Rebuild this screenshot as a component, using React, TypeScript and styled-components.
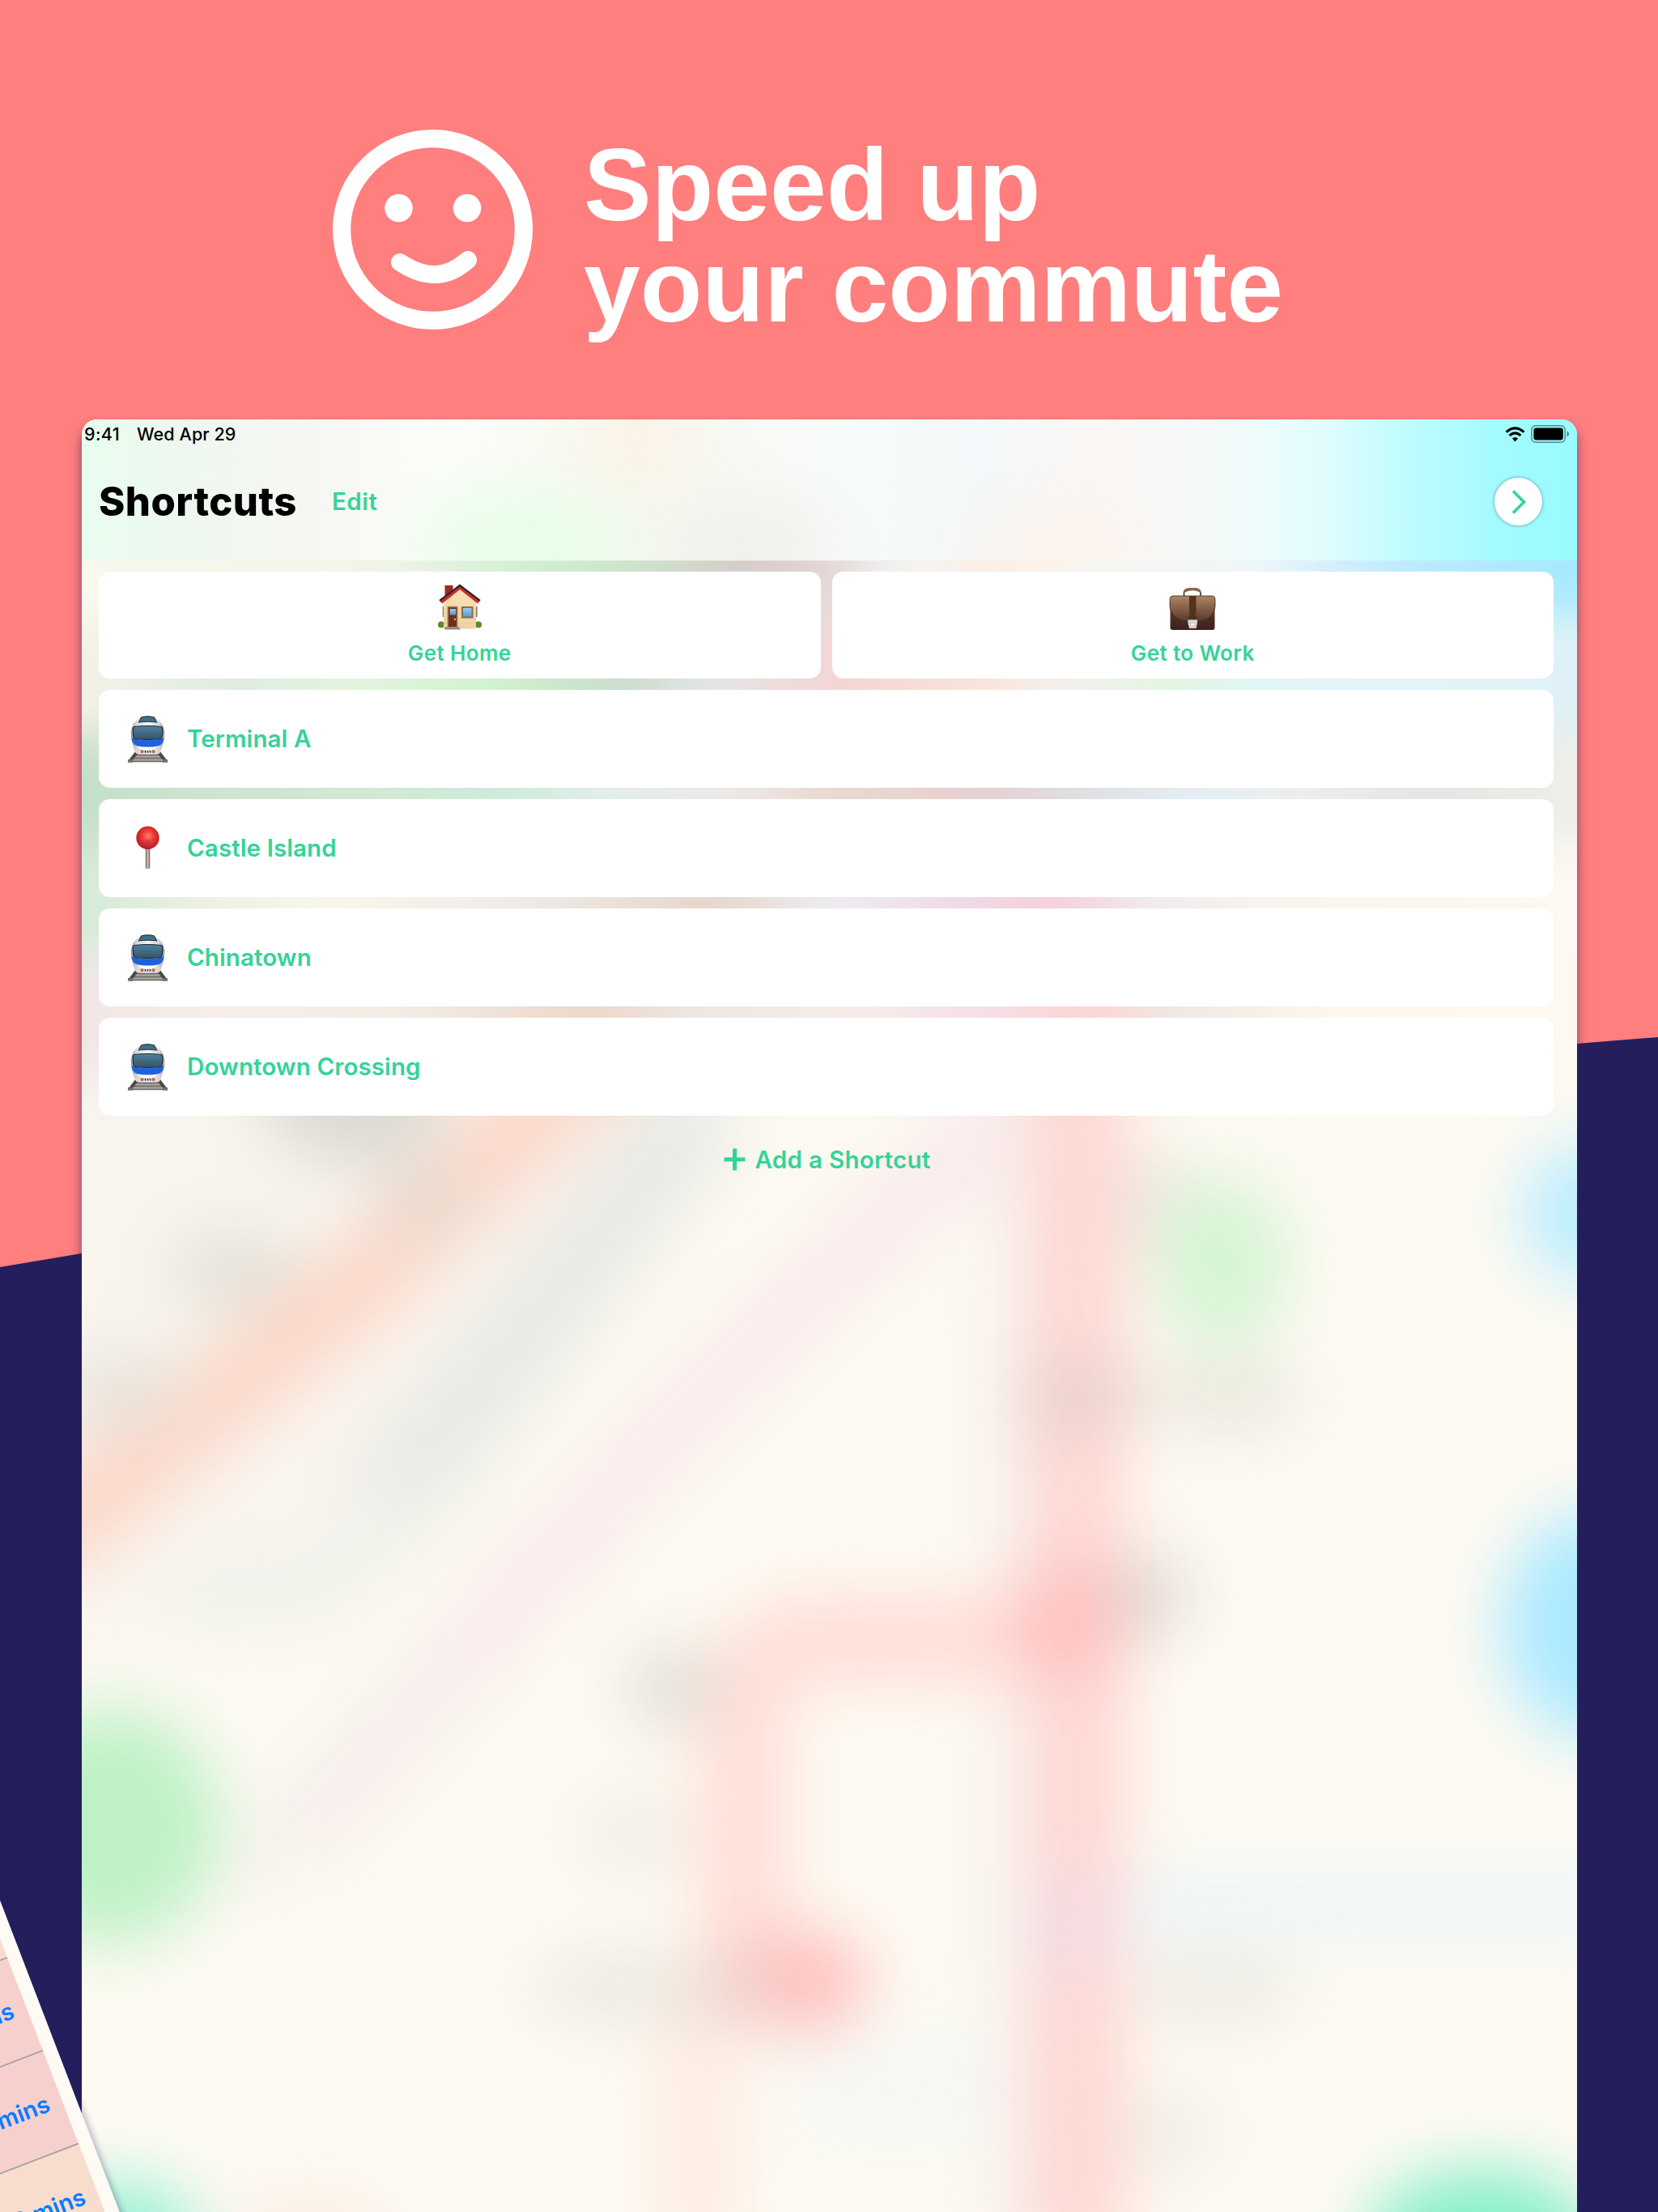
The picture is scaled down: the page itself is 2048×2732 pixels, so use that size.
import styled, { createGlobalStyle } from "styled-components";

const GlobalStyle = createGlobalStyle`
  * {
    box-sizing: border-box;
  }

  body {
    margin: 0;
    background-color: #ff7e7e;
  }

  p, h1, h2 {
    margin: 0;
  }
`;

const Page = styled.main`
  position: relative;
  width: 2048px;
  height: 2732px;
  overflow: hidden;
  background-color: #ff7e7e;
  font-family: Inter, "Liberation Sans", sans-serif;
`;

const NavyFloor = styled.div`
  position: absolute;
  inset: 0;
  background-color: #241f5c;
  clip-path: polygon(
    0 1565px,
    101px 1548px,
    1024px 1397px,
    1948px 1289px,
    2048px 1281px,
    2048px 2732px,
    0 2732px
  );
`;

const Hero = styled.header`
  position: relative;
  display: flex;
  align-items: flex-start;
  gap: 63px;
  height: 518px;
  padding: 160px 0 0 411px;
`;

const Headline = styled.h1`
  margin-top: 6px;
  color: #ffffff;
  font-family: "Liberation Sans", Arial, sans-serif;
  font-size: 125.4px;
  font-weight: 700;
  line-height: 125px;
  white-space: nowrap;
`;

const Screen = styled.section`
  position: relative;
  width: 1847px;
  height: 2260px;
  margin-left: 101px;
  border-radius: 19px;
  box-shadow: 0 10px 14px rgba(36, 31, 92, 0.6);
`;

const ScreenClip = styled.div`
  position: relative;
  height: 100%;
  border-radius: 19px;
  overflow: hidden;
  background-color: #fdfaf2;
`;

const MapArt = styled.svg`
  position: absolute;
  inset: 0;
`;

const TopBar = styled.div`
  position: relative;
  height: 174px;
`;

const StatusBar = styled.div`
  position: relative;
  display: flex;
  align-items: center;
  height: 36px;
  padding: 0 9px 0 3px;
  color: #000000;
  font-size: 21.5px;
  font-weight: 500;
`;

const StatusTime = styled.p`
  width: 65px;
  letter-spacing: 0.4px;
`;

const StatusDate = styled.p`
  flex-grow: 1;
  letter-spacing: 0.1px;
`;

const StatusIcons = styled.div`
  display: flex;
  align-items: center;
  gap: 7px;
`;

const TitleRow = styled.div`
  position: relative;
  display: flex;
  align-items: center;
  height: 130px;
  padding: 0 43px 0 21px;
`;

const Title = styled.h2`
  width: 288px;
  padding-top: 2px;
  font-size: 49px;
  font-weight: 800;
  line-height: 60px;
  letter-spacing: 0.5px;
`;

const EditButton = styled.button`
  flex-grow: 1;
  padding: 0;
  border: none;
  background: none;
  color: #34d399;
  font-family: inherit;
  font-size: 29.5px;
  font-weight: 600;
  letter-spacing: 0.5px;
  text-align: left;
`;

const NextButton = styled.button`
  display: flex;
  justify-content: center;
  align-items: center;
  width: 59px;
  height: 59px;
  margin-top: 1px;
  padding: 0 0 0 3px;
  border: none;
  border-radius: 50%;
  background-color: #ffffff;
  box-shadow: 0 0 4px rgba(0, 40, 50, 0.45);
`;

const ShortcutList = styled.div`
  position: relative;
  display: flex;
  flex-direction: column;
  gap: 14.3px;
  padding: 14px 29px 0 21px;
`;

const TileRow = styled.div`
  display: grid;
  grid-template-columns: 1fr 1fr;
  gap: 14px;
`;

const Tile = styled.div`
  display: flex;
  flex-direction: column;
  align-items: center;
  height: 132px;
  padding-top: 14px;
  border-radius: 14px;
  background-color: #ffffff;
`;

const TileLabel = styled.p`
  margin-top: 11px;
  color: #34d399;
  font-size: 26px;
  font-weight: 600;
  line-height: 32px;
  letter-spacing: 0.4px;
`;

const ShortcutRow = styled.div`
  display: flex;
  align-items: center;
  gap: 22px;
  height: 120.7px;
  padding-left: 34px;
  border-radius: 14px;
  background-color: #ffffff;
`;

const ShortcutName = styled.p`
  padding-bottom: 2px;
  color: #34d399;
  font-size: 29.5px;
  font-weight: 600;
  letter-spacing: 0.1px;
`;

const AddButton = styled.button`
  display: flex;
  justify-content: center;
  align-items: center;
  gap: 11px;
  height: 80px;
  padding: 0 0 0 3px;
  border: none;
  background: none;
  color: #34d399;
  font-family: inherit;
  font-size: 29.5px;
  font-weight: 600;
  letter-spacing: 0.3px;
`;

// second device, tilted and mostly off the page
const TiltedPhone = styled.aside`
  position: absolute;
  top: 2183px;
  left: -363px;
  width: 300px;
  height: 900px;
  padding: 0 17.5px;
  background-color: #fefaf4;
  box-shadow: 2px 2px 8px rgba(36, 31, 92, 0.35);
  transform: rotate(-21deg);
  transform-origin: top right;
`;

const DepartureRow = styled.div<{ $tone: string }>`
  display: flex;
  justify-content: flex-end;
  align-items: center;
  height: 123px;
  padding: 2px 16px 0 0;
  border-bottom: 2px solid #a3a1a3;
  background-color: ${(props) => props.$tone};
  color: #0a7cff;
  font-size: 29px;
  font-weight: 600;
`;

const bands = [
  {
    y: 360,
    height: 65,
    stops: ["0 #f9f7ee", "20 #f2f4ea", "31 #cdeed0", "38 #cfe0cc", "44 #d6ccc8", "50 #e3d5d5", "54 #f3f4f2", "62 #fdeee4", "68 #f7f7f2", "78 #f0f6f8", "88 #bfeaff", "100 #a6e9ff"],
  },
  {
    y: 440,
    height: 80,
    stops: ["0 #f5f2e8", "10 #dfece0", "18 #e4f3df", "27 #d1f3cf", "36 #cadccd", "42 #e4e6e6", "51 #f4d4d3", "60 #f9e4da", "66 #f3f1ee", "73 #e2f6e1", "80 #e3f4fb", "90 #e2f3fa", "100 #dff1f6"],
  },
  {
    y: 520,
    height: 78,
    stops: ["0 #c5dfca", "18 #d3e8d5", "28 #cdebd9", "35 #e3eeea", "44 #ece8e6", "50 #ead9cf", "60 #e6cfd1", "67 #dfe0e3", "75 #e4f0f6", "82 #eeeeec", "90 #e4e5e4", "100 #f0eee8"],
  },
  {
    y: 598,
    height: 78,
    stops: ["0 #d4ebd8", "8 #ecf0e3", "16 #f9f7ed", "30 #efeae7", "42 #e6d6cb", "50 #eeedf1", "58 #efdce9", "65 #f6cfd9", "71 #f0eaec", "80 #f9f5ee", "100 #fcf9f2"],
  },
  {
    y: 676,
    height: 78,
    stops: ["0 #f0e6e5", "10 #f7eee9", "22 #f1ece5", "34 #edd7cb", "41 #ece8e3", "52 #f7ecea", "60 #f4e0e8", "67 #fdd4d4", "73 #efe8e3", "84 #fdf8ee", "100 #fdf9f1"],
  },
];

const shortcuts = [
  { name: "Terminal A", icon: "train" },
  { name: "Castle Island", icon: "pin" },
  { name: "Chinatown", icon: "train" },
  { name: "Downtown Crossing", icon: "train" },
];

const departures = [
  { tone: "#f8ddcb", label: "3 mins" },
  { tone: "#f8ddcb", label: "5 mins" },
  { tone: "#f6d0cd", label: "6 mins" },
  { tone: "#f6d0cd", label: "8 mins" },
  { tone: "#f8ddcc", label: "9 mins" },
];

function BlurredMap() {
  return (
    <MapArt
      width="1847"
      height="2214"
      viewBox="57.95 297.2 1059.7 1270.3"
      preserveAspectRatio="none"
      fill="none"
    >
      <defs>
        <filter
          id="soft"
          filterUnits="userSpaceOnUse"
          x="-100"
          y="200"
          width="1400"
          height="1500"
          colorInterpolationFilters="sRGB"
        >
          <feGaussianBlur stdDeviation="23" />
        </filter>
        <filter
          id="bandSoft"
          filterUnits="userSpaceOnUse"
          x="-100"
          y="200"
          width="1400"
          height="1500"
          colorInterpolationFilters="sRGB"
        >
          <feGaussianBlur stdDeviation="14" />
        </filter>
        {bands.map((band, i) => (
          <linearGradient id={`band${i}`} key={i} gradientUnits="userSpaceOnUse" x1="58" x2="1118" y1="0" y2="0">
            {band.stops.map((stop) => {
              const [offset, color] = stop.split(" ");
              return <stop key={offset} offset={`${offset}%`} stopColor={color} />;
            })}
          </linearGradient>
        ))}
        <linearGradient id="bar" x1="0" x2="1" y1="0" y2="0">
          <stop offset="0" stopColor="#e7fdee" />
          <stop offset="0.06" stopColor="#edf8ef" />
          <stop offset="0.14" stopColor="#f5f6f1" />
          <stop offset="0.24" stopColor="#fcfdf9" />
          <stop offset="0.37" stopColor="#f8f7ef" />
          <stop offset="0.5" stopColor="#f7fbf8" />
          <stop offset="0.6" stopColor="#f3f8fa" />
          <stop offset="0.68" stopColor="#fbf6f3" />
          <stop offset="0.78" stopColor="#f1fbfb" />
          <stop offset="0.83" stopColor="#e0fcfd" />
          <stop offset="0.89" stopColor="#bdfbfe" />
          <stop offset="0.95" stopColor="#a2fbff" />
          <stop offset="1" stopColor="#98fbff" />
        </linearGradient>
      </defs>

      <g filter="url(#soft)">
        <path d="M20 730H560L420 920L200 1140L20 1180Z" fill="#f9f5ee" />
        <path d="M500 780L370 950L270 1070" stroke="#e9e9e4" strokeWidth="72" />
        <path d="M310 1060L220 1130L120 1135" stroke="#efefe9" strokeWidth="44" />
        <path d="M720 780L570 920L440 1050L330 1170L210 1300" stroke="#f9eaeb" strokeWidth="56" />
        <path d="M330 1170L170 1330" stroke="#f3eeea" strokeWidth="34" />
        <path d="M430 740L260 905L20 1100" stroke="#fcd7c8" strokeWidth="62" />
        <ellipse cx="250" cy="780" rx="64" ry="44" fill="#dad9d2" />
        <ellipse cx="300" cy="850" rx="34" ry="30" fill="#e9d8cd" />
        <ellipse cx="165" cy="900" rx="46" ry="28" fill="#e3e1d9" />
        <ellipse cx="85" cy="985" rx="46" ry="28" fill="#e8e3db" />
        <path d="M718 700V1600" stroke="#f5f0ec" strokeWidth="30" />
        <path d="M764 700V1600" stroke="#ffd6d2" strokeWidth="66" />
        <path d="M764 1162H580Q527 1162 527 1220V1420" stroke="#ffddd6" strokeWidth="60" />
        <path d="M495 1430V1600" stroke="#fdebe2" strokeWidth="56" />
        <ellipse cx="758" cy="1150" rx="44" ry="42" fill="#ffc2c0" />
        <ellipse cx="566" cy="1404" rx="50" ry="36" fill="#ffbfbd" />
        <ellipse cx="762" cy="1365" rx="34" ry="46" fill="#f6d8de" />
        <ellipse cx="765" cy="990" rx="46" ry="26" fill="#eacfcb" />
        <ellipse cx="870" cy="990" rx="56" ry="24" fill="#e8e6dc" />
        <ellipse cx="815" cy="1130" rx="26" ry="28" fill="#dbd5cf" />
        <ellipse cx="820" cy="850" rx="28" ry="34" fill="#ece7df" />
        <ellipse cx="478" cy="1196" rx="34" ry="28" fill="#e0ddd6" />
        <ellipse cx="450" cy="1300" rx="38" ry="26" fill="#f0ece4" />
        <ellipse cx="440" cy="1408" rx="62" ry="24" fill="#ebe8e0" />
        <ellipse cx="515" cy="1410" rx="26" ry="28" fill="#ecd6ce" />
        <ellipse cx="862" cy="1408" rx="58" ry="24" fill="#ebe9e2" />
        <ellipse cx="828" cy="1512" rx="36" ry="26" fill="#efece5" />
        <path d="M800 1350H1160" stroke="#ebf5f8" strokeWidth="44" />
        <path d="M560 1480H710" stroke="#f6f7f3" strokeWidth="80" />
        <ellipse cx="866" cy="895" rx="48" ry="60" fill="#d5f4d3" />
        <ellipse cx="78" cy="1294" rx="78" ry="84" fill="#bef1c6" />
        <ellipse cx="84" cy="1592" rx="56" ry="46" fill="#94f0d2" />
        <ellipse cx="1050" cy="1592" rx="82" ry="54" fill="#84efc8" />
        <ellipse cx="1136" cy="860" rx="58" ry="50" fill="#baecff" />
        <ellipse cx="1138" cy="1152" rx="74" ry="82" fill="#abe9ff" />
        <ellipse cx="220" cy="1590" rx="60" ry="34" fill="#fbece4" />
      </g>

      <g filter="url(#bandSoft)">
        {bands.map((band, i) => (
          <rect key={i} x="-20" y={band.y} width="1220" height={band.height + 12} fill={`url(#band${i})`} />
        ))}
      </g>

      <rect x="57" y="297" width="1062" height="100.2" fill="url(#bar)" />
      <clipPath id="barClip">
        <rect x="57" y="297" width="1062" height="100.2" />
      </clipPath>
      <g clipPath="url(#barClip)">
        <g filter="url(#soft)">
          <ellipse cx="372" cy="385" rx="80" ry="36" fill="#e6fde8" />
          <ellipse cx="530" cy="385" rx="60" ry="28" fill="#efeeea" />
          <ellipse cx="452" cy="310" rx="34" ry="32" fill="#fbf1e5" />
          <ellipse cx="740" cy="388" rx="60" ry="22" fill="#fdf2ea" />
        </g>
      </g>
    </MapArt>
  );
}

function Smiley() {
  return (
    <svg width="247" height="247" viewBox="0 0 247 247" fill="none">
      <circle cx="123.5" cy="123.5" r="112.4" stroke="#ffffff" strokeWidth="22.2" />
      <circle cx="81.5" cy="97" r="17.3" fill="#ffffff" />
      <circle cx="166" cy="97" r="17.3" fill="#ffffff" />
      <path
        d="M83 164Q105 179 126 179Q147 179 167 161"
        stroke="#ffffff"
        strokeWidth="22"
        strokeLinecap="round"
      />
    </svg>
  );
}

function WifiIcon() {
  return (
    <svg width="25" height="19" viewBox="0 0 25 19" fill="none">
      <path d="M1.6 6.6Q12.5 -3 23.4 6.6" stroke="#000000" strokeWidth="3.1" />
      <path d="M5.6 10.9Q12.5 5 19.4 10.9" stroke="#000000" strokeWidth="3.1" />
      <path d="M8.9 14.6Q12.5 11.4 16.1 14.6L12.5 18.4Z" fill="#000000" />
    </svg>
  );
}

function BatteryIcon() {
  return (
    <svg width="48" height="22" viewBox="0 0 48 22" fill="none">
      <rect x="0.8" y="0.8" width="41.4" height="20.4" rx="5" stroke="#000000" strokeOpacity="0.45" strokeWidth="1.5" />
      <rect x="3.4" y="3.4" width="36.4" height="15.2" rx="3" fill="#000000" />
      <path d="M44.6 7.2Q47 8.4 47 11Q47 13.6 44.6 14.8Z" fill="#000000" fillOpacity="0.5" />
    </svg>
  );
}

function HouseIcon() {
  return (
    <svg width="56" height="60" viewBox="0 0 56 60" fill="none">
      <defs>
        <linearGradient id="houseWall" x1="0" x2="0" y1="0" y2="1">
          <stop offset="0" stopColor="#f9e2b5" />
          <stop offset="1" stopColor="#ecd2a5" />
        </linearGradient>
        <linearGradient id="houseGlass" x1="0" x2="0" y1="0" y2="1">
          <stop offset="0" stopColor="#9accec" />
          <stop offset="1" stopColor="#5c9dca" />
        </linearGradient>
      </defs>
      <circle cx="5" cy="51.5" r="4" fill="#5d8a27" />
      <circle cx="51" cy="51.5" r="4" fill="#5d8a27" />
      <path d="M6.8 29h2v13h-2zM47.6 29h2v13h-2z" fill="#8c7660" />
      <path d="M9.5 3h10v17h-10z" fill="#9c2b20" />
      <path d="M8 24L28 8L48 24V56.5H8Z" fill="url(#houseWall)" />
      <path d="M8.5 32H48M8.5 38H48M8.5 44H48M8.5 50H48" stroke="#dec394" strokeWidth="0.6" />
      <path d="M4.6 23.8L28 5.3L51.4 23.8" stroke="#cb2f25" strokeWidth="4.6" />
      <path d="M3 21.8L28 3L53 21.8" stroke="#26292b" strokeWidth="2.2" />
      <path d="M12.5 28.8H25.5V55H12.5Z" fill="#a58462" />
      <path d="M14 30.3H24V54H14Z" fill="#70301c" />
      <path d="M15.6 32H23V39.5H15.6Z" fill="url(#houseGlass)" />
      <circle cx="22" cy="45" r="1.2" fill="#f2b431" />
      <path d="M30 29H44.5V43.5H30Z" fill="#8d694b" />
      <path d="M32 31H42.5V41.5H32Z" fill="url(#houseGlass)" />
      <path d="M10 54.5H27L29 57.5H8.5Z" fill="#95887e" />
    </svg>
  );
}

function BriefcaseIcon() {
  return (
    <svg width="60" height="60" viewBox="0 0 60 60" fill="none">
      <defs>
        <linearGradient id="caseBody" x1="0" x2="0" y1="0" y2="1">
          <stop offset="0" stopColor="#5d3c2b" />
          <stop offset="1" stopColor="#3b211b" />
        </linearGradient>
        <linearGradient id="caseFlap" x1="0" x2="0" y1="0" y2="1">
          <stop offset="0" stopColor="#ad8665" />
          <stop offset="1" stopColor="#583729" />
        </linearGradient>
      </defs>
      <path d="M19.5 16V12Q20 7.5 25 7.5H34Q39.5 7.5 40 12V16" stroke="#3f2a21" strokeWidth="1.6" />
      <path d="M19.5 12Q20.5 6 26 6H34Q39.5 6 40.5 12Q34 9.3 30 9.3Q25 9.3 19.5 12Z" fill="#8b664b" />
      <path d="M2.5 27H57.5V55Q57.5 58 54.5 58H5.5Q2.5 58 2.5 55Z" fill="url(#caseBody)" />
      <path
        d="M5.5 16H54.5Q57.5 16 58 20V29Q56.5 44 39 47.5H21Q3.5 44 2 29V20Q2.5 16 5.5 16Z"
        fill="url(#caseFlap)"
        stroke="#402820"
        strokeWidth="0.8"
      />
      <path d="M26 16H34.5V39H26Z" fill="#55341f" />
      <path d="M25 45Q25 39 30 38.5Q35.5 39 35.5 45Z" fill="#51301f" />
      <path d="M24.3 45.5H36V49L34.5 56H26L24.3 49Z" fill="#d8d8d7" />
      <path d="M27.5 49.5H33V53H27.5Z" fill="#f6f6f6" stroke="#a5a5a5" strokeWidth="0.5" />
    </svg>
  );
}

function TrainIcon() {
  return (
    <svg width="53" height="60" viewBox="0 0 53 60" fill="none">
      <defs>
        <linearGradient id="trainBody" x1="0" x2="1" y1="0" y2="0">
          <stop offset="0" stopColor="#8f9096" />
          <stop offset="0.15" stopColor="#d5d5d9" />
          <stop offset="0.5" stopColor="#f2f2f5" />
          <stop offset="0.85" stopColor="#d5d5d9" />
          <stop offset="1" stopColor="#8f9096" />
        </linearGradient>
        <linearGradient id="trainGlass" x1="0" x2="0" y1="0" y2="1">
          <stop offset="0" stopColor="#4d83a0" />
          <stop offset="1" stopColor="#345266" />
        </linearGradient>
      </defs>
      <path d="M12 47H41L46 58H7Z" fill="#a7a49f" />
      <path d="M12 49.5H41M9 53.5H44M6 57.5H47" stroke="#6d6a66" strokeWidth="1.5" />
      <path d="M13 46L5 56.5M40 46L48 56.5" stroke="#494845" strokeWidth="4" />
      <path d="M2 55H8V58.8H2ZM45 55H51V58.8H45Z" fill="#6f6e6a" />
      <path
        d="M17 4Q26.5 0.5 36 4Q46 9 47.3 21Q47.5 29 45.5 35L42 46Q41 48.5 37 48.5H16Q12 48.5 11 46L7.5 35Q5.500 29 5.700 21Q7 9 17 4Z"
        fill="url(#trainBody)"
      />
      <path d="M15.5 9L18.500 3Q26.500 0.800 34.500 3L37.500 9Q26.500 7.500 15.500 9Z" fill="#3d718a" stroke="#283139" strokeWidth="1.1" />
      <path d="M6.5 28.5Q26.500 34 46.500 28.500Q45.500 36 40.500 38Q26.500 41 12.500 38Q7.500 36 6.500 28.500Z" fill="#1c62e0" />
      <path
        d="M10 14.5Q26.500 12.500 43 14.500Q44.800 15 44.800 18L44.300 26.500Q44 29 41.500 29.500Q26.500 31.800 11.500 29.500Q9 29 8.700 26.500L8.200 18Q8.200 15 10 14.500Z"
        fill="url(#trainGlass)"
        stroke="#222b35"
        strokeWidth="1.2"
      />
      <path d="M14 39.3Q26.500 41.500 39 39.300L34.500 42.500H18.500Z" fill="#ffffff" />
      <circle cx="19.5" cy="45.3" r="2" fill="#dc5640" />
      <circle cx="33.5" cy="45.3" r="2" fill="#dc5640" />
      <path d="M23.5 44V46.800M26.500 44V46.800M29.500 44V46.800" stroke="#373940" strokeWidth="1.7" />
    </svg>
  );
}

function PinIcon() {
  return (
    <svg width="53" height="60" viewBox="0 0 53 60" fill="none">
      <defs>
        <radialGradient id="pinHead" cx="0.52" cy="0.42" r="0.58">
          <stop offset="0" stopColor="#ff7d66" />
          <stop offset="0.45" stopColor="#eb3a38" />
          <stop offset="1" stopColor="#b5161f" />
        </radialGradient>
        <linearGradient id="pinStem" x1="0" x2="1" y1="0" y2="0">
          <stop offset="0" stopColor="#615552" />
          <stop offset="0.5" stopColor="#d8c5b8" />
          <stop offset="1" stopColor="#665a56" />
        </linearGradient>
      </defs>
      <rect x="23.8" y="28" width="5.4" height="27" rx="1.5" fill="url(#pinStem)" />
      <circle cx="26.5" cy="16.8" r="14.2" fill="url(#pinHead)" />
      <path d="M24.5 19H28.5L29.5 30H23.5Z" fill="#a9354a" fillOpacity="0.45" />
    </svg>
  );
}

export default function App() {
  return (
    <>
      <GlobalStyle />
      <Page>
        <NavyFloor />
        <Hero>
          <Smiley />
          <Headline>
            Speed up
            <br />
            your commute
          </Headline>
        </Hero>

        <Screen>
          <ScreenClip>
            <BlurredMap />
            <TopBar>
              <StatusBar>
                <StatusTime>9:41</StatusTime>
                <StatusDate>Wed Apr 29</StatusDate>
                <StatusIcons>
                  <WifiIcon />
                  <BatteryIcon />
                </StatusIcons>
              </StatusBar>
              <TitleRow>
                <Title>Shortcuts</Title>
                <EditButton>Edit</EditButton>
                <NextButton>
                  <svg width="20" height="32" viewBox="0 0 20 32" fill="none">
                    <path d="M2 2.5L15.5 16L2 29.5" stroke="#34d399" strokeWidth="3.6" />
                  </svg>
                </NextButton>
              </TitleRow>
            </TopBar>

            <ShortcutList>
              <TileRow>
                <Tile>
                  <HouseIcon />
                  <TileLabel>Get Home</TileLabel>
                </Tile>
                <Tile>
                  <BriefcaseIcon />
                  <TileLabel>Get to Work</TileLabel>
                </Tile>
              </TileRow>
              {shortcuts.map(({ name, icon }) => (
                <ShortcutRow key={name}>
                  {icon === "train" ? <TrainIcon /> : <PinIcon />}
                  <ShortcutName>{name}</ShortcutName>
                </ShortcutRow>
              ))}
              <AddButton>
                <svg width="27" height="28" viewBox="0 0 27 28">
                  <path d="M11 0.5H16V11.5H26.5V16.5H16V27.5H11V16.5H0.5V11.5H11Z" fill="#34d399" />
                </svg>
                Add a Shortcut
              </AddButton>
            </ShortcutList>
          </ScreenClip>
        </Screen>

        <TiltedPhone>
          {departures.map(({ tone, label }) => (
            <DepartureRow key={label} $tone={tone}>
              {label}
            </DepartureRow>
          ))}
        </TiltedPhone>
      </Page>
    </>
  );
}
